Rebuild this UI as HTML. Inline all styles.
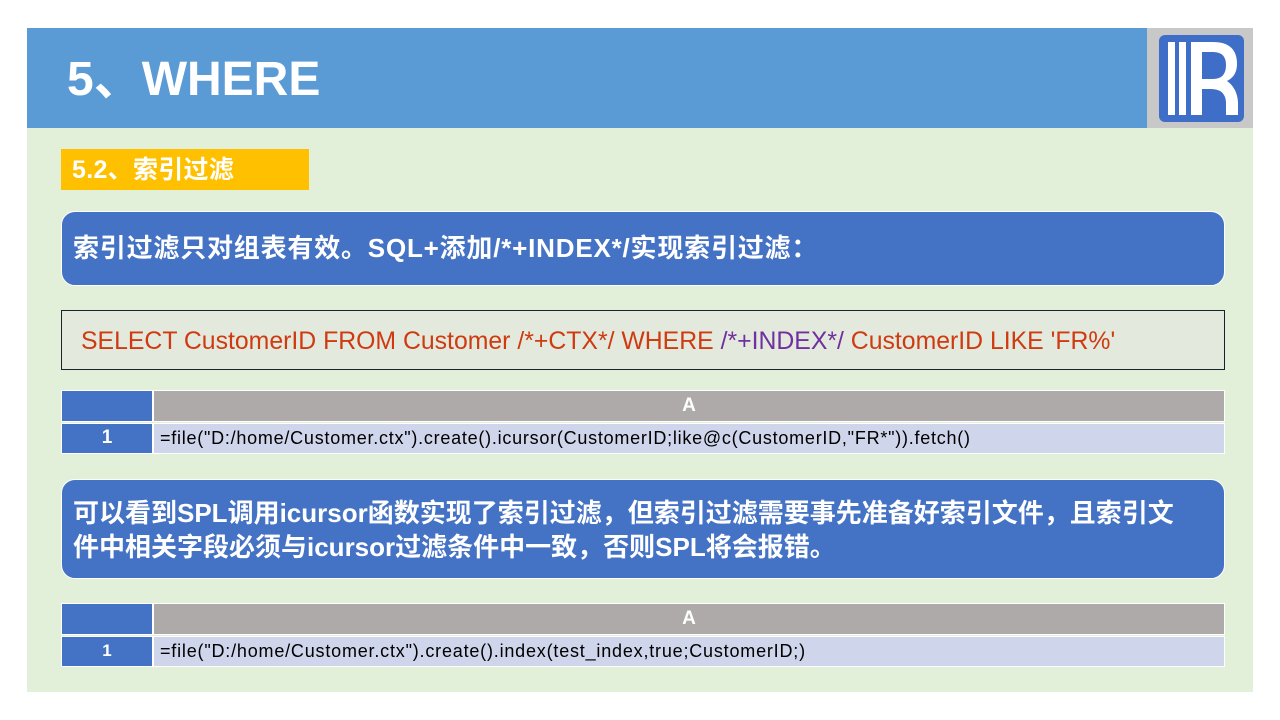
<!DOCTYPE html>
<html><head><meta charset="utf-8">
<style>
*{margin:0;padding:0;box-sizing:border-box}
body{width:1280px;height:720px;background:#fff;position:relative;overflow:hidden;font-family:"Liberation Sans","Noto Sans CJK SC",sans-serif}
.abs{position:absolute}
#panel{left:27px;top:28px;width:1226px;height:664px;background:#e2efd9}
#hdr{left:27px;top:28px;width:1120px;height:100px;background:#5b9bd5;color:#fff;font-weight:bold;font-size:48px;line-height:104px;padding-left:40px}
#logo{left:1147px;top:28px;width:106px;height:100px;background:#c8c8c8}
#yl{left:61px;top:149px;width:248px;height:41px;background:#ffc000;color:#fff;font-weight:bold;font-size:25px;line-height:43px;padding-left:11px;letter-spacing:0.3px}
.bb{background:#4472c4;border:1.5px solid #fff;border-radius:14px;color:#fff;font-weight:bold;font-size:26px;padding-left:11px}
#sql{left:61px;top:310px;width:1164px;height:60px;border:1.5px solid #1a2030;background:#e3e9dd;font-size:24.8px;line-height:62px;padding-left:19px;color:#d03a10;white-space:nowrap}
.tb{left:61px;width:1164px}
.row{position:absolute;left:0;width:1164px;display:flex}
.c1{width:92px;background:#4472c4;color:#fff;font-weight:bold;text-align:center;border:1px solid #fff}
.c2{flex:1;border:1px solid #fff;white-space:nowrap}
</style></head><body>
<div class="abs" id="panel"></div>
<div class="abs" id="hdr">5、WHERE</div>
<div class="abs" id="logo">
<svg width="106" height="100" viewBox="0 0 106 100">
<rect x="12" y="7" width="85" height="87" rx="6" fill="#3e6ec8"/>
<rect x="21" y="14" width="7" height="73" fill="#fff"/>
<rect x="32" y="14" width="7" height="73" fill="#fff"/>
<path d="M44 14 H66 Q90 14 90 36 Q90 48 80 53 Q90 60 91 74 V87 H79 V74 Q78 61 64 61 H55 V87 H44 Z M55 24 V51 H66 Q79 51 79 37 Q79 24 66 24 Z" fill="#fff" fill-rule="evenodd"/>
</svg></div>
<div class="abs" id="yl">5.2、索引过滤</div>
<div class="abs bb" style="left:61px;top:211px;width:1164px;height:75px;line-height:72px;letter-spacing:0.8px">索引过滤只对组表有效。SQL+添加/*+INDEX*/实现索引过滤：</div>
<div class="abs" id="sql">SELECT CustomerID FROM Customer /*+CTX*/ WHERE <span style="color:#7030a0">/*+INDEX*/</span> CustomerID LIKE 'FR%'</div>
<div class="abs tb" style="top:390px;height:65px">
<div class="row" style="top:0;height:32px"><div class="c1"></div><div class="c2" style="background:#aeaaaa;color:#fff;font-weight:bold;text-align:center;font-size:19px;line-height:29px">A</div></div>
<div class="row" style="top:33px;height:31px"><div class="c1" style="font-size:19px;line-height:27px">1</div><div class="c2" style="background:#cfd5ea;font-size:18px;line-height:29px;padding-left:6px;letter-spacing:0.75px">=file("D:/home/Customer.ctx").create().icursor(CustomerID;like@c(CustomerID,"FR*")).fetch()</div></div>
</div>
<div class="abs bb" style="left:61px;top:479px;width:1164px;height:100px;line-height:34px;padding-top:16px;white-space:nowrap">可以看到SPL调用icursor函数实现了索引过滤，但索引过滤需要事先准备好索引文件，且索引文<br>件中相关字段必须与icursor过滤条件中一致，否则SPL将会报错。</div>
<div class="abs tb" style="top:603px;height:64px">
<div class="row" style="top:0;height:32px"><div class="c1"></div><div class="c2" style="background:#aeaaaa;color:#fff;font-weight:bold;text-align:center;font-size:19px;line-height:29px">A</div></div>
<div class="row" style="top:33px;height:31px"><div class="c1" style="font-size:17px;line-height:27px">1</div><div class="c2" style="background:#cfd5ea;font-size:18px;line-height:29px;padding-left:6px;letter-spacing:0.8px">=file("D:/home/Customer.ctx").create().index(test_index,true;CustomerID;)</div></div>
</div>
</body></html>
